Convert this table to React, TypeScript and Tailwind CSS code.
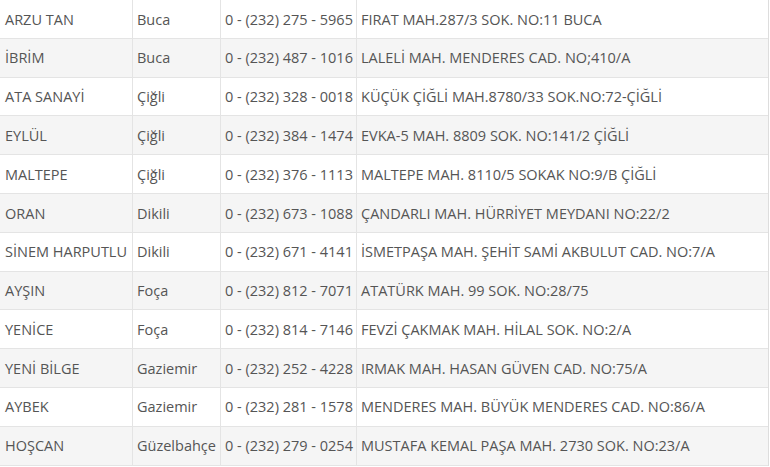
const rows: [string, string, string, string][] = [
  ['ARZU TAN', 'Buca', '0 - (232) 275 - 5965', 'FIRAT MAH.287/3 SOK. NO:11 BUCA'],
  ['İBRİM', 'Buca', '0 - (232) 487 - 1016', 'LALELİ MAH. MENDERES CAD. NO;410/A'],
  ['ATA SANAYİ', 'Çiğli', '0 - (232) 328 - 0018', 'KÜÇÜK ÇİĞLİ MAH.8780/33 SOK.NO:72-ÇİĞLİ'],
  ['EYLÜL', 'Çiğli', '0 - (232) 384 - 1474', 'EVKA-5 MAH. 8809 SOK. NO:141/2 ÇİĞLİ'],
  ['MALTEPE', 'Çiğli', '0 - (232) 376 - 1113', 'MALTEPE MAH. 8110/5 SOKAK NO:9/B ÇİĞLİ'],
  ['ORAN', 'Dikili', '0 - (232) 673 - 1088', 'ÇANDARLI MAH. HÜRRİYET MEYDANI NO:22/2'],
  ['SİNEM HARPUTLU', 'Dikili', '0 - (232) 671 - 4141', 'İSMETPAŞA MAH. ŞEHİT SAMİ AKBULUT CAD. NO:7/A'],
  ['AYŞIN', 'Foça', '0 - (232) 812 - 7071', 'ATATÜRK MAH. 99 SOK. NO:28/75'],
  ['YENİCE', 'Foça', '0 - (232) 814 - 7146', 'FEVZİ ÇAKMAK MAH. HİLAL SOK. NO:2/A'],
  ['YENİ BİLGE', 'Gaziemir', '0 - (232) 252 - 4228', 'IRMAK MAH. HASAN GÜVEN CAD. NO:75/A'],
  ['AYBEK', 'Gaziemir', '0 - (232) 281 - 1578', 'MENDERES MAH. BÜYÜK MENDERES CAD. NO:86/A'],
  ['HOŞCAN', 'Güzelbahçe', '0 - (232) 279 - 0254', 'MUSTAFA KEMAL PAŞA MAH. 2730 SOK. NO:23/A'],
];

export default function App() {
  return (
    <div className="w-[770px] h-[467px] overflow-hidden bg-white font-['Open_Sans',sans-serif] text-[14.5px] text-[#555]">
      <div className="w-[769px] border-r border-[#ddd]">
        {rows.map((r, i) => (
          <div
            key={i}
            className={`flex h-[38.8px] border-b border-[#e4e4e4] ${i % 2 === 1 ? 'bg-[#f5f5f5]' : 'bg-white'}`}
          >
            <div className="w-[133px] shrink-0 flex items-center pt-[1px] pl-[5px] border-r border-[#e4e4e4] whitespace-nowrap">{r[0]}</div>
            <div className="w-[88px] shrink-0 flex items-center pt-[1px] pl-[4px] border-r border-[#e4e4e4] whitespace-nowrap">{r[1]}</div>
            <div className="w-[136px] shrink-0 flex items-center pt-[1px] pl-[4px] border-r border-[#e4e4e4] whitespace-nowrap">{r[2]}</div>
            <div className="flex-1 flex items-center pt-[1px] pl-[4px] whitespace-nowrap">{r[3]}</div>
          </div>
        ))}
      </div>
    </div>
  );
}
